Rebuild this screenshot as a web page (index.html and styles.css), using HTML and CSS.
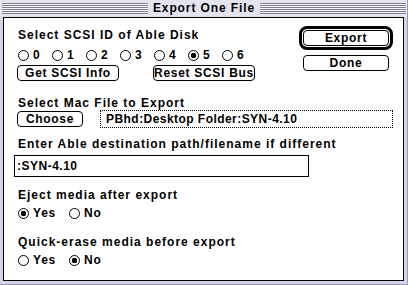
FILE: index.html
```html
<!DOCTYPE html>
<html lang="en">
<head>
  <title>Export One File</title>
  <link rel="stylesheet" href="styles.css">
</head>
<body>

  <div id="window">
    <div id="titleBar">
      <div class="stripes"></div>
      <div id="title">Export One File</div>
      <div class="stripes"></div>
    </div>

    <div id="content">
      <div id="topRow">
        <div id="scsiDiv">
          <div class="label">Select SCSI ID of Able Disk</div>
          <div class="radioRow scsiRow">
            <span class="radio"><span class="dot"></span>0</span>
            <span class="radio"><span class="dot"></span>1</span>
            <span class="radio"><span class="dot"></span>2</span>
            <span class="radio"><span class="dot"></span>3</span>
            <span class="radio"><span class="dot"></span>4</span>
            <span class="radio"><span class="dot on"></span>5</span>
            <span class="radio"><span class="dot"></span>6</span>
          </div>
          <div id="scsiButtons">
            <button class="wide">Get SCSI Info</button>
            <button class="wide">Reset SCSI Bus</button>
          </div>
        </div>

        <div id="actionDiv">
          <div class="defaultRing"><button class="action">Export</button></div>
          <button class="action">Done</button>
        </div>
      </div>

      <!-- file to export -->
      <div class="label sectionLabel">Select Mac File to Export</div>
      <div id="fileRow">
        <button id="chooseButton">Choose</button>
        <div id="filePath">PBhd:Desktop Folder:SYN-4.10</div>
      </div>

      <div class="label" id="destLabel">Enter Able destination path/filename if different</div>
      <div id="destInput">:SYN-4.10</div>

      <div class="label" id="ejectLabel">Eject media after export</div>
      <div class="radioRow yesNo">
        <span class="radio"><span class="dot on"></span>Yes</span>
        <span class="radio"><span class="dot"></span>No</span>
      </div>

      <div class="label" id="eraseLabel">Quick-erase media before export</div>
      <div class="radioRow yesNo">
        <span class="radio"><span class="dot"></span>Yes</span>
        <span class="radio"><span class="dot on"></span>No</span>
      </div>
    </div>
  </div>

</body>
</html>
```

FILE: styles.css
```css
    body {
      margin: 0;
      background-color: #ccccdd;
      color: black;
      font-family: "Liberation Sans", Arial, sans-serif;
      font-size: 12px;
      font-weight: bold;
    }

    #window {
      width: 408px;
      height: 285px;
      box-sizing: border-box;
      background-color: #d4d4e6;
      border-right: 1px solid #9898b8;
      border-bottom: 1px solid #9898b8;
      display: flex;
      flex-direction: column;
    }

    #titleBar {
      height: 17px;
      display: flex;
      align-items: center;
      gap: 5px;
      padding: 0 1px 0 2px;
      background-color: #e4e4f0;
    }

    .stripes {
      flex: 1;
      height: 11px;
      background: repeating-linear-gradient(to bottom, #80808e 0 1px, #f4f4fa 1px 2px);
    }

    #title {
      line-height: 17px;
      letter-spacing: 0.9px;
    }

    #content {
      margin: 0 3px 3px 3px;
      height: 264px;
      box-sizing: border-box;
      border: 1px solid black;
      background-color: white;
      padding: 0 10px 0 13px;
    }

    .label {
      line-height: 13px;
      padding-left: 1px;
      letter-spacing: 1px;
      white-space: nowrap;
    }

    #topRow {
      display: flex;
      justify-content: space-between;
    }

    #scsiDiv {
      padding-top: 11px;
    }

    .radioRow {
      display: flex;
      height: 13px;
      align-items: center;
      padding-left: 1px;
      letter-spacing: 0.8px;
    }

    .scsiRow {
      margin-top: 7px;
    }

    .scsiRow .radio {
      width: 34px;
    }

    .radio {
      display: flex;
      align-items: center;
      gap: 4px;
      line-height: 13px;
    }

    .dot {
      width: 11px;
      height: 11px;
      box-sizing: border-box;
      border: 1px solid black;
      border-radius: 50%;
      background-color: white;
    }

    .dot.on {
      background: radial-gradient(circle, black 0 2.6px, white 3px);
    }

    button {
      height: 16px;
      box-sizing: border-box;
      padding: 0;
      border: 1px solid black;
      border-radius: 4px;
      background-color: white;
      color: black;
      font-family: "Liberation Sans", Arial, sans-serif;
      font-size: 12px;
      font-weight: bold;
      letter-spacing: 0.7px;
      line-height: 14px;
      white-space: nowrap;
    }

    #scsiButtons {
      display: flex;
      gap: 34px;
      margin-top: 3px;
    }

    button.wide {
      width: 102px;
    }

    #actionDiv {
      display: flex;
      flex-direction: column;
      align-items: center;
      gap: 5px;
      padding-top: 8px;
      width: 94px;
    }

    .defaultRing {
      border: 3px solid black;
      border-radius: 8px;
      padding: 1px;
      display: flex;
    }

    button.action {
      width: 86px;
      height: 16px;
    }

    .sectionLabel {
      margin-top: 16px;
    }

    #fileRow {
      display: flex;
      align-items: center;
      gap: 17px;
      height: 18px;
    }

    #chooseButton {
      width: 66px;
    }

    #filePath {
      flex: 1;
      height: 18px;
      box-sizing: border-box;
      border: 1px dotted black;
      padding-left: 5px;
      line-height: 16px;
      letter-spacing: 0.45px;
    }

    #destLabel {
      margin-top: 10px;
    }

    #destInput {
      width: 295px;
      height: 22px;
      box-sizing: border-box;
      margin: 4px 0 0 -3px;
      border: 1px solid black;
      padding-left: 2px;
      line-height: 20px;
      letter-spacing: 0.5px;
    }

    #ejectLabel {
      margin-top: 12px;
    }

    #eraseLabel {
      margin-top: 16px;
    }

    .yesNo {
      margin-top: 5px;
      gap: 12px;
    }

    .yesNo .radio {
      width: 39px;
    }
```
